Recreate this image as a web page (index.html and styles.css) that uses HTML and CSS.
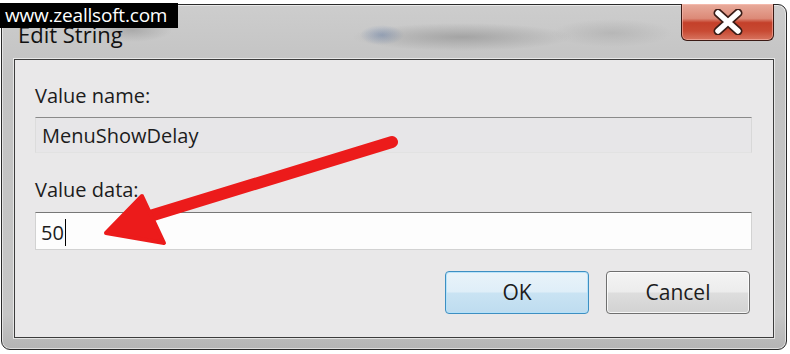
FILE: index.html
```html
<!DOCTYPE html>
<html lang="en">
<head>
    <meta charset="UTF-8">
    <title>Edit String</title>
    <link rel="stylesheet" href="styles.css">
</head>
<body>
    <div class="window">
        <div class="titlebar">
            <span class="title">Edit String</span>
            <div class="close-btn">
                <svg width="30" height="26" viewBox="0 0 30 26">
                    <path d="M5 4 L25 22 M25 4 L5 22" stroke="#3a1c16" stroke-width="9" stroke-linecap="round"/>
                    <path d="M5 4 L25 22 M25 4 L5 22" stroke="#ffffff" stroke-width="5.5" stroke-linecap="round"/>
                </svg>
            </div>
        </div>
        <div class="client">
            <div class="label">Value name:</div>
            <div class="name-field">MenuShowDelay</div>
            <div class="label label-data">Value data:</div>
            <div class="data-field"><span>50</span><span class="caret"></span></div>
            <div class="buttons">
                <div class="btn btn-ok">OK</div>
                <div class="btn">Cancel</div>
            </div>
        </div>
    </div>

    <div class="watermark">www.zeallsoft.com</div>

    <svg class="arrow" width="790" height="354" viewBox="0 0 790 354">
        <line x1="392" y1="142" x2="150" y2="216" stroke="#ec1b1b" stroke-width="12" stroke-linecap="round"/>
        <polygon points="106,233 142,196 164,243" fill="#ec1b1b" stroke="#ec1b1b" stroke-width="4" stroke-linejoin="round"/>
    </svg>
</body>
</html>
```

FILE: styles.css
```css
body {
    margin: 0;
    width: 790px;
    height: 354px;
    overflow: hidden;
    position: relative;
    background: #ffffff;
    font-family: "Open Sans", "Noto Sans", sans-serif;
    color: #1c1c1c;
}

.window {
    box-sizing: border-box;
    margin: 4px 0 0 1px;
    width: 786px;
    height: 346px;
    border: 1px solid #2a2a2a;
    border-radius: 9px;
    padding: 0 12px 11px 12px;
    display: flex;
    flex-direction: column;
    background:
        radial-gradient(ellipse 40px 12px at 130px 25px, rgba(140, 140, 140, 0.5), transparent),
        radial-gradient(ellipse 110px 14px at 460px 32px, rgba(120, 120, 120, 0.45), transparent),
        radial-gradient(ellipse 22px 10px at 380px 30px, rgba(90, 120, 170, 0.45), transparent),
        radial-gradient(ellipse 60px 14px at 610px 28px, rgba(150, 150, 150, 0.35), transparent),
        linear-gradient(to bottom, #cdcdcd, #c2c2c2 20%, #c6c6c6 90%, #b4b4b4);
    box-shadow: inset 0 0 0 1px rgba(255, 255, 255, 0.55);
}

.titlebar {
    height: 54px;
    display: flex;
    justify-content: space-between;
    align-items: flex-start;
}

.title {
    padding: 14px 0 0 4px;
    font-size: 22px;
    line-height: 30px;
    color: #111;
}

.close-btn {
    box-sizing: border-box;
    width: 93px;
    height: 37px;
    margin-top: -1px;
    border: 1px solid #3b1a14;
    border-top: none;
    border-radius: 0 0 6px 6px;
    display: flex;
    justify-content: center;
    align-items: center;
    background: linear-gradient(to bottom, #e8ab9c, #dc8a78 40%, #c4402a 52%, #c84a33 75%, #d77560);
    box-shadow: inset 0 0 0 1px rgba(255, 200, 190, 0.5);
}

.client {
    flex: 1;
    border: 1px solid #3c3c3c;
    background: #e9e8e9;
    padding: 24px 21px 0 20px;
    box-shadow: 0 0 0 1px rgba(255, 255, 255, 0.6);
}

.label {
    font-size: 20px;
    line-height: 24px;
}

.name-field {
    box-sizing: border-box;
    margin-top: 9px;
    height: 36px;
    padding: 3px 6px 0;
    border-top: 1px solid #8a8a8a;
    border-left: 1px solid #dcdcdc;
    border-right: 1px solid #d8d8d8;
    border-bottom: 1px solid #e2e2e2;
    font-size: 20px;
    line-height: 30px;
    background: #e7e6e8;
}

.label-data {
    margin-top: 25px;
}

.data-field {
    box-sizing: border-box;
    margin-top: 10px;
    height: 38px;
    padding: 3px 5px 0;
    border: 1px solid #d2d2d2;
    border-top-color: #777;
    background: #fdfdfd;
    font-size: 20px;
    line-height: 32px;
    display: flex;
    align-items: center;
}

.caret {
    display: inline-block;
    width: 1px;
    height: 27px;
    margin-left: 1px;
    background: #000;
}

.buttons {
    margin-top: 21px;
    margin-right: 2px;
    display: flex;
    justify-content: flex-end;
    gap: 17px;
}

.btn {
    box-sizing: border-box;
    width: 144px;
    height: 43px;
    border: 1px solid #6f6f6f;
    border-radius: 4px;
    font-size: 21px;
    line-height: 41px;
    text-align: center;
    background: linear-gradient(to bottom, #f4f4f4, #ececec 48%, #dddddd 52%, #d2d2d2);
    box-shadow: inset 0 0 0 1px rgba(255, 255, 255, 0.8);
}

.btn-ok {
    border-color: #3d8fc2;
    background: linear-gradient(to bottom, #e9f3f9, #dfeef8 48%, #c9e3f3 52%, #bedcef);
    box-shadow: inset 0 0 0 1px rgba(180, 225, 250, 0.9);
}

.watermark {
    position: absolute;
    left: 0;
    top: 3px;
    width: 178px;
    height: 25px;
    background: #000;
    color: #fff;
    font-size: 19px;
    line-height: 25px;
    padding-left: 5px;
    box-sizing: border-box;
    white-space: nowrap;
    letter-spacing: -0.2px;
}

.arrow {
    position: absolute;
    left: 0;
    top: 0;
    pointer-events: none;
}
```
